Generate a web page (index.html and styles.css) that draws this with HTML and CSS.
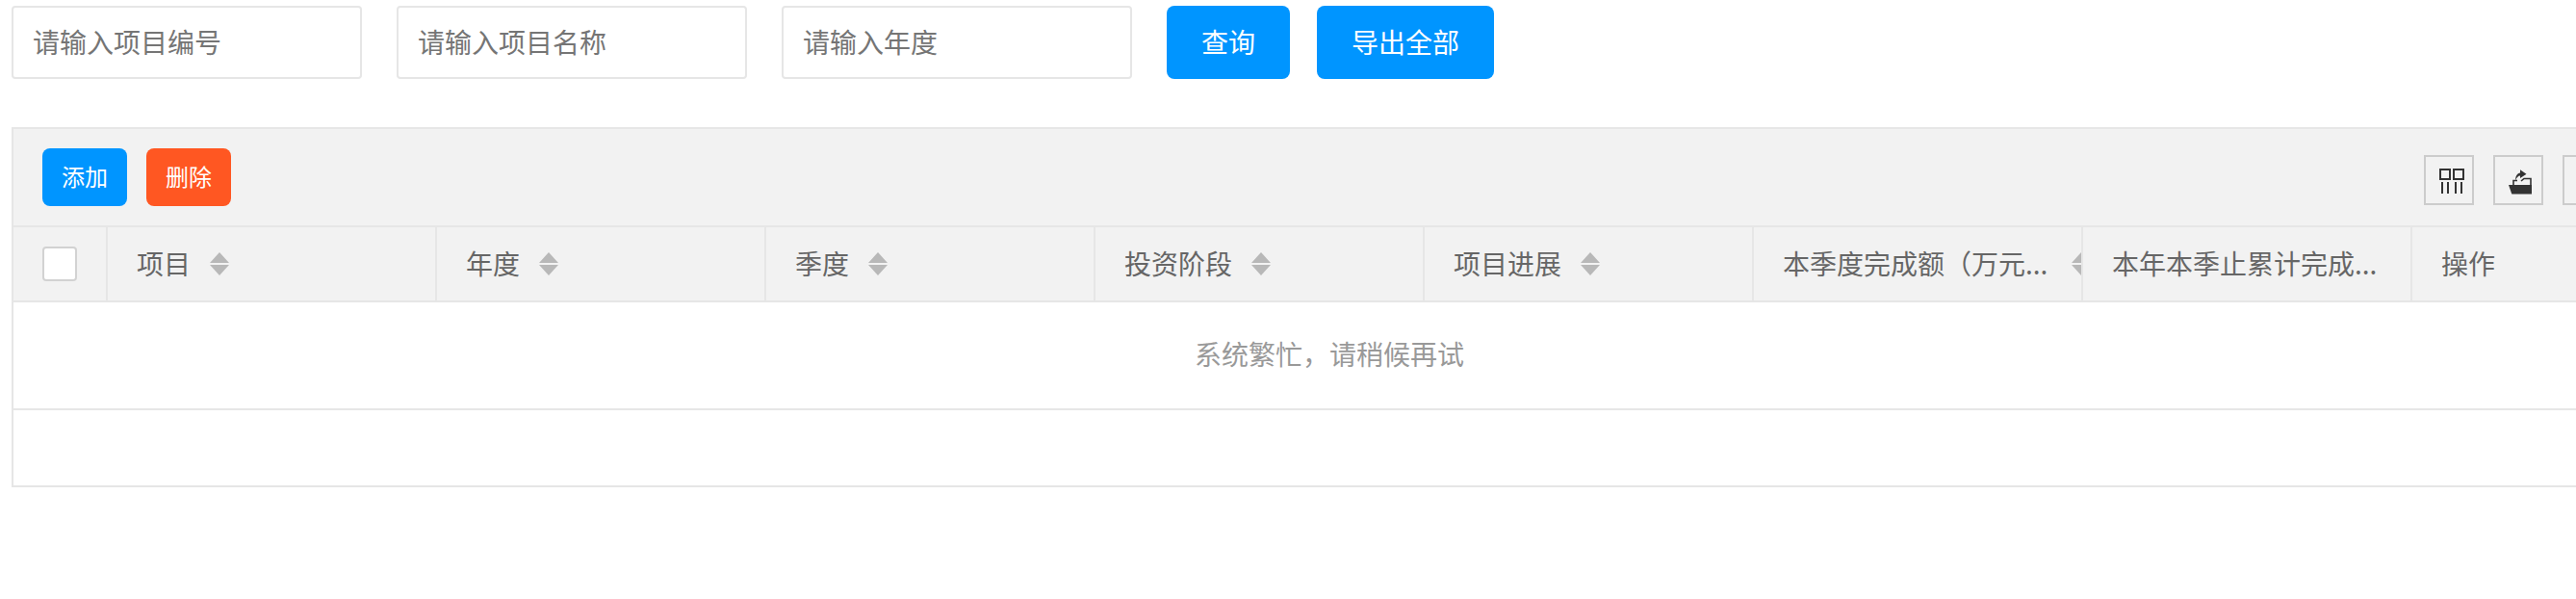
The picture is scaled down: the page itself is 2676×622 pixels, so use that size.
FILE: index.html
```html
<!DOCTYPE html>
<html lang="zh-CN">

<head>
    <meta charset="UTF-8">
    <title>项目列表</title>
    <link rel="stylesheet" href="styles.css">
</head>

<body>
    <!-- Search bar -->
    <form class="search-bar">
        <input class="search-input" type="text" placeholder="请输入项目编号">
        <input class="search-input" type="text" placeholder="请输入项目名称">
        <input class="search-input" type="text" placeholder="请输入年度">
        <button class="btn btn-query" type="button">查询</button>
        <button class="btn btn-export" type="button">导出全部</button>
    </form>

    <!-- Table box -->
    <div class="table-box">
        <div class="toolbar">
            <div class="toolbar-left">
                <button class="btn-small btn-add" type="button">添加</button>
                <button class="btn-small btn-del" type="button">删除</button>
            </div>
            <div class="toolbar-right">
                <div class="tool-icon">
                    <svg width="26" height="26" viewBox="0 0 26 26" fill="none" stroke="#333" stroke-width="2">
                        <rect x="1" y="1" width="10" height="10"></rect>
                        <rect x="15" y="1" width="10" height="10"></rect>
                        <path d="M3 14V26M9 14V26M17 14V26M23 14V26"></path>
                    </svg>
                </div>
                <div class="tool-icon">
                    <svg width="26" height="28" viewBox="0 -1 26 28">
                        <path d="M7 12.5C7 8 9 5 12 4.5V1.3L18.5 5.7L12 10V7.5C10 7.5 8 9.5 7 12.5Z" fill="#333"></path>
                        <path d="M5 17V12.5H9M13 13L16 10.5H23V17" fill="none" stroke="#333" stroke-width="1.6"></path>
                        <path d="M0 17H24V26.5H3.3Z" fill="#333"></path>
                    </svg>
                </div>
                <div class="tool-icon"></div>
            </div>
        </div>

        <div class="table-head">
            <div class="head-cell check-cell"><span class="checkbox"></span></div>
            <div class="head-cell"><span class="head-text">项目</span><i class="sort"></i></div>
            <div class="head-cell"><span class="head-text">年度</span><i class="sort"></i></div>
            <div class="head-cell"><span class="head-text">季度</span><i class="sort"></i></div>
            <div class="head-cell"><span class="head-text">投资阶段</span><i class="sort"></i></div>
            <div class="head-cell"><span class="head-text">项目进展</span><i class="sort"></i></div>
            <div class="head-cell"><span class="head-text long">本季度完成额（万元...</span><i class="sort"></i></div>
            <div class="head-cell"><span class="head-text long">本年本季止累计完成...</span></div>
            <div class="head-cell last-cell"><span class="head-text">操作</span></div>
        </div>

        <div class="table-empty">系统繁忙，请稍候再试</div>
        <div class="table-foot"></div>
    </div>
</body>

</html>
```

FILE: styles.css
```css
/* General page styling */
html,
body {
    height: 100%;
    overflow: hidden;
}

body {
    margin: 0;
    width: 2676px;
    background-color: #fff;
    font-family: "Noto Sans CJK SC", "Noto Sans", sans-serif;
    font-size: 28px;
    color: #666;
}

/* Search bar */
.search-bar {
    display: flex;
    padding: 6px 12px 0;
    height: 76px;
}

.search-input {
    box-sizing: border-box;
    width: 364px;
    height: 76px;
    margin-right: 36px;
    padding: 0 20px 3px;
    border: 2px solid #e6e6e6;
    border-radius: 4px;
    font-family: inherit;
    font-size: 28px;
    color: #333;
    outline: none;
}

.search-input::placeholder {
    color: #757575;
}

.btn {
    height: 76px;
    padding: 0 0 3px;
    border: none;
    border-radius: 8px;
    background-color: #0095ff;
    color: #fff;
    font-family: inherit;
    font-size: 28px;
}

.btn-query {
    width: 128px;
    margin-right: 28px;
}

.btn-export {
    width: 184px;
}

/* Table box */
.table-box {
    box-sizing: border-box;
    width: 2738px;
    margin: 50px 0 0 12px;
    border: 2px solid #e6e6e6;
}

.toolbar {
    display: flex;
    justify-content: space-between;
    align-items: center;
    height: 100px;
    padding: 0 0 0 30px;
    background-color: #f2f2f2;
    box-sizing: border-box;
}

.toolbar-left {
    display: flex;
    gap: 20px;
}

.btn-small {
    width: 88px;
    height: 60px;
    padding: 0 0 3px;
    border: none;
    border-radius: 8px;
    color: #fff;
    font-family: inherit;
    font-size: 24px;
}

.btn-add {
    background-color: #0095ff;
}

.btn-del {
    background-color: #ff5722;
}

.toolbar-right {
    display: flex;
    gap: 20px;
    margin-top: 6px;
    margin-right: 16px;
    width: 214px;
    flex-shrink: 0;
}

.tool-icon {
    box-sizing: border-box;
    display: flex;
    justify-content: center;
    align-items: center;
    width: 52px;
    height: 52px;
    padding: 2px 0 0 6px;
    flex-shrink: 0;
    border: 2px solid #ccc;
}

/* Table head */
.table-head {
    display: flex;
    height: 80px;
    box-sizing: border-box;
    border-top: 2px solid #e6e6e6;
    border-bottom: 2px solid #e6e6e6;
    background-color: #f2f2f2;
}

.head-cell {
    box-sizing: border-box;
    display: flex;
    align-items: center;
    flex-shrink: 0;
    width: 342px;
    padding: 0 30px;
    border-right: 2px solid #e6e6e6;
    overflow: hidden;
}

.check-cell {
    width: 98px;
}

.last-cell {
    flex: 1;
    border-right: none;
}

.head-text {
    flex-shrink: 0;
    margin-bottom: 3px;
    white-space: nowrap;
}

.head-text.long {
    width: 280px;
}

.checkbox {
    box-sizing: border-box;
    flex-shrink: 0;
    width: 36px;
    height: 36px;
    border: 2px solid #d2d2d2;
    border-radius: 4px;
    background-color: #fff;
}

/* Sort arrows, two css triangles */
.sort {
    display: flex;
    flex-direction: column;
    flex-shrink: 0;
    gap: 2px;
    margin-left: 20px;
}

.sort::before,
.sort::after {
    content: "";
    width: 0;
    height: 0;
    border-left: 10px solid transparent;
    border-right: 10px solid transparent;
}

.sort::before {
    border-bottom: 11px solid #b8b8b8;
}

.sort::after {
    border-top: 11px solid #b8b8b8;
}

/* Table body */
.table-empty {
    height: 110px;
    line-height: 107px;
    text-align: center;
    color: #999;
}

.table-foot {
    height: 78px;
    border-top: 2px solid #e6e6e6;
}
```
